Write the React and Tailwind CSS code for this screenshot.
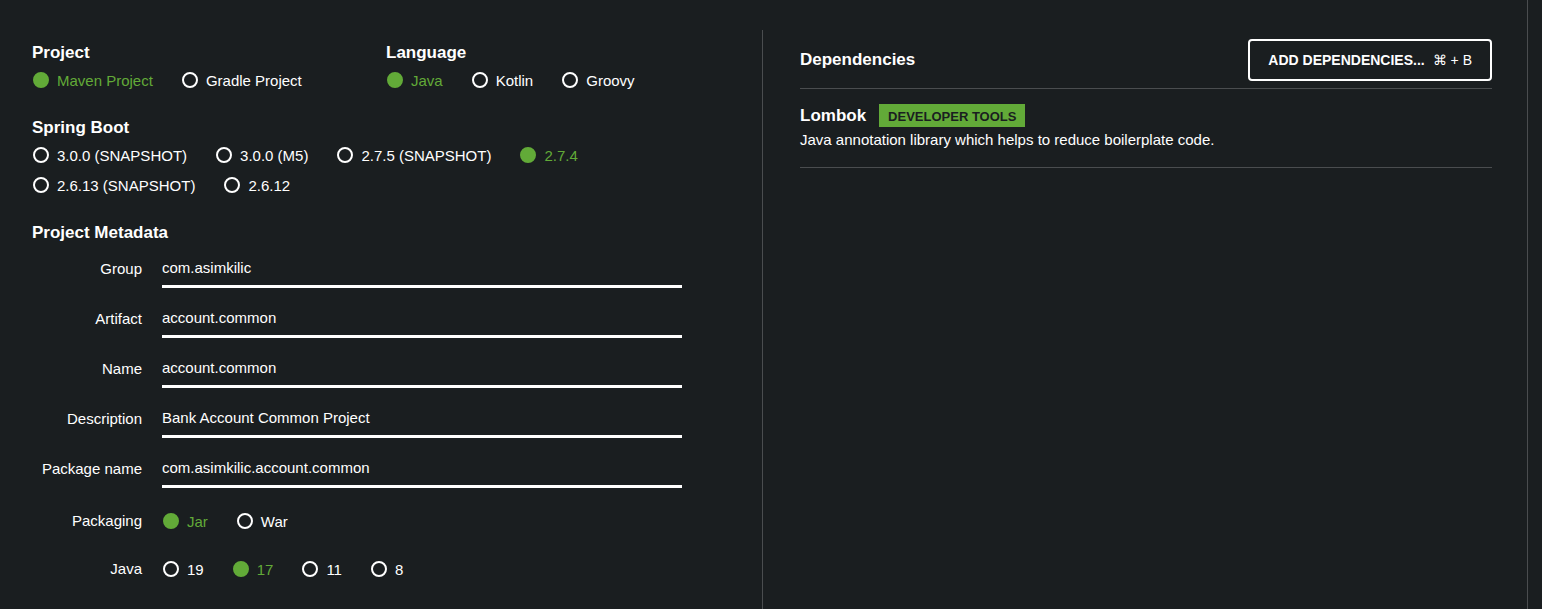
import { useState } from 'react';

const FIELDS = [
  ['group', 'Group', 'com.asimkilic'],
  ['artifact', 'Artifact', 'account.common'],
  ['name', 'Name', 'account.common'],
  ['description', 'Description', 'Bank Account Common Project'],
  ['packageName', 'Package name', 'com.asimkilic.account.common'],
];

function RadioGroup({ name, label, options, initial }) {
  const [value, setValue] = useState(initial);
  return (
    <div role="radiogroup" aria-label={label} className="flex flex-wrap gap-x-[29px] pl-px">
      {options.map((option) => (
        <label
          key={option}
          className="flex h-[30px] cursor-pointer items-center gap-2 has-checked:text-[#62aa38]"
        >
          <input
            type="radio"
            name={name}
            value={option}
            checked={value === option}
            onChange={() => setValue(option)}
            className="size-4 shrink-0 appearance-none rounded-full border-2 border-white checked:border-[#62aa38] checked:bg-[#62aa38]"
          />
          <span className="pt-0.5 leading-5">{option}</span>
        </label>
      ))}
    </div>
  );
}

function Heading({ children }) {
  return <h2 className="text-[17px] leading-6 font-bold">{children}</h2>;
}

function ProjectForm() {
  return (
    <form className="border-r border-[#4a4d4f] pt-[11px] pr-20 pl-8">
      <div className="grid grid-cols-[354px_1fr]">
        <section>
          <Heading>Project</Heading>
          <RadioGroup
            name="project"
            label="Project"
            options={['Maven Project', 'Gradle Project']}
            initial="Maven Project"
          />
        </section>
        <section>
          <Heading>Language</Heading>
          <RadioGroup
            name="language"
            label="Language"
            options={['Java', 'Kotlin', 'Groovy']}
            initial="Java"
          />
        </section>
      </div>
      <section className="mt-[21px]">
        <Heading>Spring Boot</Heading>
        <RadioGroup
          name="boot"
          label="Spring Boot"
          options={[
            '3.0.0 (SNAPSHOT)',
            '3.0.0 (M5)',
            '2.7.5 (SNAPSHOT)',
            '2.7.4',
            '2.6.13 (SNAPSHOT)',
            '2.6.12',
          ]}
          initial="2.7.4"
        />
      </section>
      <section className="mt-[21px]">
        <Heading>Project Metadata</Heading>
        <div className="mt-[5px] flex flex-col gap-3">
          {FIELDS.map(([id, label, value]) => (
            <div key={id} className="grid grid-cols-[110px_1fr] items-start gap-5">
              <label htmlFor={id} className="pt-[9px] text-right leading-5">
                {label}
              </label>
              <input
                id={id}
                type="text"
                defaultValue={value}
                className="h-[38px] w-full border-b-[3px] border-white bg-transparent leading-5 outline-none"
              />
            </div>
          ))}
        </div>
        <div className="mt-[18px] flex flex-col gap-[18px] pb-6">
          <div className="grid grid-cols-[110px_1fr] items-center gap-5">
            <span className="text-right leading-5">Packaging</span>
            <RadioGroup
              name="packaging"
              label="Packaging"
              options={['Jar', 'War']}
              initial="Jar"
            />
          </div>
          <div className="grid grid-cols-[110px_1fr] items-center gap-5">
            <span className="text-right leading-5">Java</span>
            <RadioGroup
              name="java"
              label="Java version"
              options={['19', '17', '11', '8']}
              initial="17"
            />
          </div>
        </div>
      </section>
    </form>
  );
}

function Dependencies() {
  return (
    <section className="pt-[9px] pr-[34px] pl-[37px]">
      <header className="flex items-center justify-between border-b border-[#4a4d4f] pb-[7px]">
        <Heading>Dependencies</Heading>
        <button
          type="button"
          className="flex h-[42px] items-center gap-2 rounded border-2 border-white px-[18px] text-sm"
        >
          <span className="font-bold">ADD DEPENDENCIES...</span>
          <span>⌘ + B</span>
        </button>
      </header>
      <ul>
        <li className="border-b border-[#4a4d4f] pt-[15px] pb-4">
          <div className="flex items-start gap-[13px]">
            <h3 className="text-[17px] leading-6 font-bold">Lombok</h3>
            <span className="bg-[#62aa38] px-[9px] pt-0.5 text-[13px] leading-[21px] font-bold text-[#1a1e20]">
              DEVELOPER TOOLS
            </span>
          </div>
          <p className="pt-px leading-[22px]">
            Java annotation library which helps to reduce boilerplate code.
          </p>
        </li>
      </ul>
    </section>
  );
}

export default function App() {
  return (
    <div className="flex min-h-screen bg-[#1a1e20] font-['Liberation_Sans',Arial,sans-serif] text-[15px] text-white">
      <main className="grid flex-1 grid-cols-2 pt-[30px] pr-px">
        <ProjectForm />
        <Dependencies />
      </main>
      <aside className="w-[15px] border-l border-[#4a4d4f]" />
    </div>
  );
}
